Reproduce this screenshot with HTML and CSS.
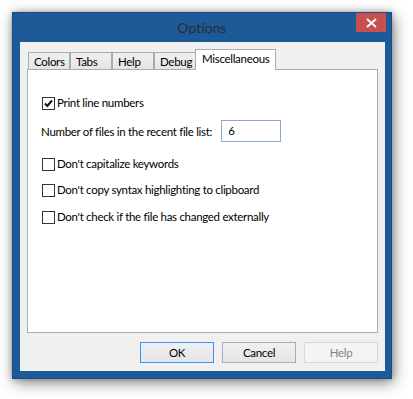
FILE: index.html
```html
<!DOCTYPE html>
<html>
<head>
<meta charset="utf-8">
<link rel="stylesheet" href="styles.css">
</head>
<body>
<div class="desk">
  <div class="window">
    <div class="titlebar">
      <span></span>
      <span class="title">Options</span>
      <button class="close" aria-label="Close">
        <svg width="11" height="10" viewBox="0 0 11 10"><path d="M1 1 L10 9 M10 1 L1 9" stroke="#fff" stroke-width="1.8" fill="none"/></svg>
      </button>
    </div>
    <div class="frame">
      <div class="client">
        <div class="tabs">
          <div class="tab">Colors</div>
          <div class="tab">Tabs</div>
          <div class="tab">Help</div>
          <div class="tab">Debug</div>
          <div class="tab selected">Miscellaneous</div>
        </div>
        <div class="panel">
          <label class="check first"><span class="box checked"><svg width="11" height="11" viewBox="0 0 11 11"><path d="M2 5.5 L4.3 8 L9 2.5" stroke="#111" stroke-width="2" fill="none"/></svg></span>Print line numbers</label>
          <div class="field"><span>Number of files in the recent file list:</span><span class="input">6</span></div>
          <label class="check"><span class="box"></span>Don't capitalize keywords</label>
          <label class="check"><span class="box"></span>Don't copy syntax highlighting to clipboard</label>
          <label class="check"><span class="box"></span>Don't check if the file has changed externally</label>
        </div>
        <div class="buttons">
          <button class="btn default">OK</button>
          <button class="btn">Cancel</button>
          <button class="btn disabled">Help</button>
        </div>
      </div>
    </div>
  </div>
</div>
</body>
</html>
```
FILE: styles.css
```css
* { box-sizing: border-box; }
html, body { margin: 0; padding: 0; background: #fff; }
body {
  font-family: Lato, "Noto Sans", sans-serif;
  font-size: 11.5px;
  letter-spacing: -0.3px;
  color: #000;
  width: 413px;
  height: 399px;
  overflow: hidden;
}
.desk { padding: 12px 0 0 12px; }
.window {
  width: 380px;
  height: 367px;
  background: #1c5b97;
  border: 1px solid #174d82;
  display: flex;
  flex-direction: column;
  box-shadow: 2px 4px 14px rgba(0,0,0,0.45), 0 0 6px rgba(0,0,0,0.25);
}
.titlebar {
  height: 29px;
  display: grid;
  grid-template-columns: 1fr auto 1fr;
  align-items: start;
}
.title {
  font-size: 14px;
  letter-spacing: 0;
  color: #2c2c2c;
  line-height: 29px;
}
.close {
  justify-self: end;
  margin: 0 5px 0 0;
  width: 30px;
  height: 19px;
  border: 0;
  padding: 0;
  background: #c75050;
  display: flex;
  align-items: center;
  justify-content: center;
}
.frame {
  flex: 1;
  padding: 0 6px 7px 7px;
  display: flex;
}
.client {
  flex: 1;
  background: #f0f0f0;
  padding: 7px 7px 0 7px;
  display: flex;
  flex-direction: column;
}
.tabs {
  height: 21px;
  margin-bottom: -1px;
  padding-left: 1px;
  display: flex;
  position: relative;
  z-index: 1;
}
.tab {
  width: 42px;
  height: 17px;
  margin-top: 3px;
  border: 1px solid #acacac;
  border-bottom: 0;
  background: linear-gradient(#f0f0f0, #e5e5e5);
  padding-left: 5px;
  line-height: 17px;
  white-space: nowrap;
}
.tab.selected {
  width: 81px;
  height: 21px;
  margin-top: 0;
  margin-left: -1px;
  background: #fff;
  padding-left: 6px;
  line-height: 18px;
}
.panel {
  height: 264px;
  background: #fff;
  border: 1px solid #acacac;
  padding: 26px 0 0 14px;
  display: flex;
  flex-direction: column;
}
.check {
  display: flex;
  align-items: center;
  height: 14px;
  line-height: 14px;
  white-space: nowrap;
}
.check + .check { margin-top: 12px; }
.check:last-child { margin-top: 13px; }
.box {
  width: 13px;
  height: 13px;
  border: 1px solid #333;
  background: #fff;
  margin-right: 2px;
  display: flex;
  align-items: center;
  justify-content: center;
}
.field {
  display: flex;
  align-items: center;
  margin: 10px 0 15px -1px;
  white-space: nowrap;
}
.input {
  width: 60px;
  height: 22px;
  border: 1px solid #8aa8cf;
  margin-left: 9px;
  padding: 0 6px;
  line-height: 20px;
}
.buttons {
  display: flex;
  justify-content: flex-end;
  gap: 8px;
  margin-top: 9px;
}
.btn {
  width: 74px;
  height: 21px;
  font: inherit;
  letter-spacing: inherit;
  color: #000;
  border: 1px solid #acacac;
  background: linear-gradient(#f0f0f0, #e5e5e5);
  padding: 0;
}
.btn.default { border-color: #3399ff; }
.btn.disabled {
  color: #838383;
  border-color: #d9d9d9;
  background: #f4f4f4;
}
```
